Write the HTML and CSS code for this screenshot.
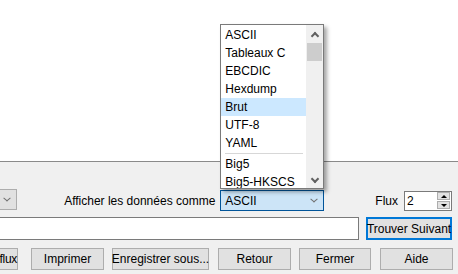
FILE: index.html
```html
<!DOCTYPE html>
<html lang="fr">
<head>
<meta charset="utf-8">
<title>Suivre le flux</title>
<link rel="stylesheet" href="styles.css">
</head>
<body>
<div class="viewer"></div>
<div class="panel">
  <div class="row row-display">
    <div class="combo combo-left"><span class="chev"></span></div>
    <span class="label display-label">Afficher les données comme</span>
    <div class="combo combo-open">
      <span class="combo-text">ASCII</span><span class="chev"></span>
      <div class="dropdown">
        <ul class="options">
          <li class="option">ASCII</li>
          <li class="option">Tableaux C</li>
          <li class="option">EBCDIC</li>
          <li class="option">Hexdump</li>
          <li class="option option-hover">Brut</li>
          <li class="option">UTF-8</li>
          <li class="option">YAML</li>
          <li class="separator"></li>
          <li class="option">Big5</li>
          <li class="option">Big5-HKSCS</li>
        </ul>
        <div class="scrollbar">
          <div class="sb-btn"><span class="sb-arrow sb-up"></span></div>
          <div class="sb-track"><div class="sb-thumb"></div></div>
          <div class="sb-btn"><span class="sb-arrow sb-down"></span></div>
        </div>
      </div>
    </div>
    <span class="label flux-label">Flux</span>
    <div class="spin">
      <span class="spin-value">2</span>
      <div class="spin-buttons">
        <span class="spin-btn"><span class="tri tri-up"></span></span>
        <span class="spin-btn"><span class="tri tri-down"></span></span>
      </div>
    </div>
  </div>
  <div class="row row-find">
    <div class="find-input"></div>
    <button class="btn btn-default">Trouver Suivant</button>
  </div>
  <div class="row row-buttons">
    <button class="btn btn-filter">flux</button>
    <button class="btn btn-print">Imprimer</button>
    <button class="btn btn-save">Enregistrer sous...</button>
    <button class="btn btn-back">Retour</button>
    <button class="btn btn-close">Fermer</button>
    <button class="btn btn-help">Aide</button>
  </div>
</div>
</body>
</html>
```

FILE: styles.css
```css
* { box-sizing: border-box; }
html, body { margin: 0; padding: 0; }
body {
  width: 458px;
  height: 274px;
  overflow: hidden;
  background: #f0f0f0;
  font-family: "Liberation Sans", Arial, sans-serif;
  font-size: 12px;
  color: #000;
}
.viewer {
  height: 162px;
  background: #fff;
  border-bottom: 1px solid #8a8a8a;
}
.panel {
  display: flex;
  flex-direction: column;
  padding-top: 28px;
}
.row {
  display: flex;
  align-items: center;
  justify-content: flex-end;
  padding-right: 6px;
}
.row-display { height: 21px; }
.row-find { height: 23px; margin-top: 6px; }
.row-buttons { height: 22px; margin-top: 8px; padding-right: 5px; }

.label { white-space: nowrap; line-height: 16px; }
.display-label { margin-right: 5px; }
.flux-label { margin-right: 6px; }

.combo {
  position: relative;
  height: 21px;
  border: 1px solid #adadad;
  background: #e1e1e1;
  display: flex;
  align-items: center;
}
.combo-left {
  width: 57px;
  margin-left: -40px;
  margin-right: auto;
  justify-content: flex-end;
  padding-right: 5px;
  align-self: flex-start;
  margin-top: -1px;
}
.chev {
  width: 8px;
  height: 5px;
  display: block;
  position: relative;
}
.chev::before, .chev::after {
  content: "";
  position: absolute;
  top: 2px;
  width: 5px;
  height: 1px;
  background: #707070;
}
.chev::before { left: 0; transform: rotate(40deg); }
.chev::after { right: 0; transform: rotate(-40deg); }

.combo-open {
  width: 104px;
  margin-right: 51px;
  background: #cce4f7;
  border-color: #005499;
  padding-left: 4px;
  padding-right: 5px;
}
.combo-text { flex: 1; line-height: 16px; }

.dropdown {
  position: absolute;
  left: -1px;
  bottom: calc(100% + 2px);
  width: 104px;
  height: 165px;
  border: 1px solid #7a7a7a;
  background: #fff;
  display: flex;
  box-shadow: 3px 3px 4px rgba(0, 0, 0, 0.35);
  z-index: 5;
}
.options {
  list-style: none;
  margin: 0;
  padding: 1px 0 0;
  flex: 1;
  overflow: hidden;
}
.option {
  height: 18px;
  line-height: 18px;
  padding-left: 4px;
  white-space: nowrap;
}
.option-hover { background: #cce8ff; }
.separator {
  height: 3px;
  padding: 1px 3px 0 4px;
}
.separator::before {
  content: "";
  display: block;
  height: 1px;
  background: #d7d7d7;
}
.scrollbar {
  width: 17px;
  background: #f0f0f0;
  display: flex;
  flex-direction: column;
}
.sb-btn {
  height: 17px;
  display: flex;
  align-items: center;
  justify-content: center;
}
.sb-track { flex: 1; padding: 1px 1px 0; }
.sb-thumb { height: 18px; background: #cdcdcd; }
.sb-arrow {
  width: 6px;
  height: 6px;
  border-left: 2px solid #606060;
  border-top: 2px solid #606060;
  display: block;
}
.sb-up { transform: translateY(2px) rotate(45deg); }
.sb-down { transform: translateY(-1px) rotate(225deg); }

.spin {
  width: 48px;
  height: 20px;
  background: #fff;
  border: 1px solid #7a7a7a;
  display: flex;
  align-items: center;
  padding-left: 2px;
  padding-right: 1px;
}
.spin-value { flex: 1; line-height: 16px; }
.spin-buttons {
  display: flex;
  flex-direction: column;
  gap: 1px;
  width: 13px;
}
.spin-btn {
  height: 8px;
  border: 1px solid #adadad;
  background: #e1e1e1;
  display: flex;
  align-items: center;
  justify-content: center;
}
.tri {
  width: 0;
  height: 0;
  border-left: 3px solid transparent;
  border-right: 3px solid transparent;
}
.tri-up { border-bottom: 3px solid #000; }
.tri-down { border-top: 3px solid #000; }

.find-input {
  flex: 1;
  height: 23px;
  margin-left: -10px;
  margin-right: 7px;
  background: #fff;
  border: 1px solid #7a7a7a;
}

.btn {
  height: 22px;
  font-family: inherit;
  font-size: 12px;
  color: #000;
  background: #e1e1e1;
  border: 1px solid #adadad;
  padding: 0;
  margin: 0;
  white-space: nowrap;
  display: flex;
  align-items: center;
  justify-content: center;
  flex: none;
}
.btn-default {
  width: 86px;
  height: 23px;
  border: 2px solid #0078d7;
}
.btn-filter {
  width: 60px;
  margin-left: -42px;
  margin-right: 13px;
  justify-content: flex-end;
  padding-right: 0;
  letter-spacing: -0.3px;
}
.btn-print { width: 73px; margin-right: 8px; }
.btn-save { width: 97px; margin-right: 9px; }
.btn-back { width: 73px; margin-right: 8px; }
.btn-close { width: 72px; margin-right: 9px; }
.btn-help { width: 73px; }
```
